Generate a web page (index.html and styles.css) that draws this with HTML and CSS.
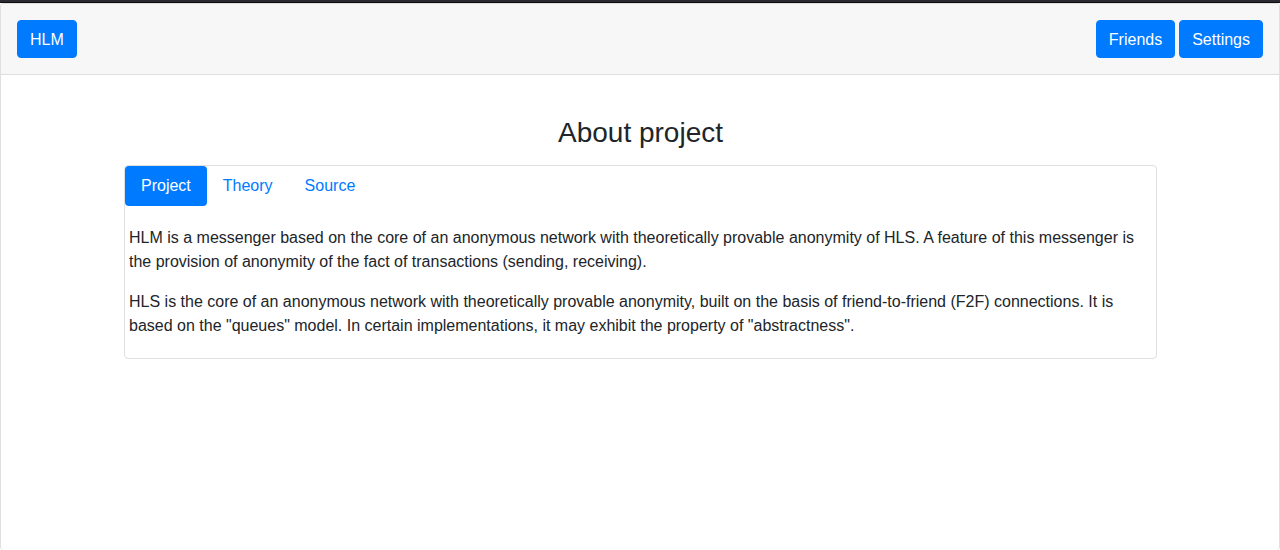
FILE: index.html
```html
<!DOCTYPE html>
<html lang="en">
<head>
<meta charset="utf-8">
<title>HLM</title>
<link rel="stylesheet" href="styles.css">
</head>
<body>
<div class="top-strip"></div>
<div class="page-card">
  <header class="page-header">
    <a class="btn" href="#home">HLM</a>
    <nav class="page-nav">
      <a class="btn" href="#friends">Friends</a>
      <a class="btn" href="#settings">Settings</a>
    </nav>
  </header>
  <main class="page-body">
    <h1 class="title">About project</h1>
    <section class="panel">
      <nav class="tabs">
        <a class="tab tab-active" href="#project">Project</a>
        <a class="tab" href="#theory">Theory</a>
        <a class="tab" href="#source">Source</a>
      </nav>
      <div class="panel-text">
        <p>HLM is a messenger based on the core of an anonymous network with theoretically provable anonymity of HLS. A feature of this messenger is the provision of anonymity of the fact of transactions (sending, receiving).</p>
        <p>HLS is the core of an anonymous network with theoretically provable anonymity, built on the basis of friend-to-friend (F2F) connections. It is based on the "queues" model. In certain implementations, it may exhibit the property of "abstractness".</p>
      </div>
    </section>
  </main>
</div>
</body>
</html>
```

FILE: styles.css
```css
* {
  box-sizing: border-box;
}

body {
  margin: 0;
  height: 100vh;
  display: flex;
  flex-direction: column;
  background: #fff;
  color: #212529;
  font: 16px/24px "Liberation Sans", Arial, sans-serif;
}

.top-strip {
  flex: none;
  height: 3px;
  background: #2b2a33;
  border-bottom: 1px solid #0c0c0d;
}

.page-card {
  flex: 1;
  border: 1px solid #dfdfdf;
  border-bottom: 0;
  border-radius: 4px;
}

.page-header {
  display: flex;
  justify-content: space-between;
  padding: 16px;
  border-bottom: 1px solid #dfdfdf;
  border-radius: 3px 3px 0 0;
  background: #f7f7f7;
}

.page-nav {
  display: flex;
  gap: 4px;
}

.btn {
  padding: 7px 12px 5px;
  border: 1px solid #007bff;
  border-radius: 4px;
  background: #007bff;
  color: #fff;
  text-decoration: none;
}

.page-body {
  padding: 40px 122px 40px 123px;
}

.title {
  margin: 0 0 14px;
  font-size: 28px;
  line-height: 36px;
  font-weight: 500;
  text-align: center;
}

.panel {
  border: 1px solid #dfdfdf;
  border-radius: 4px;
}

.tabs {
  display: flex;
}

.tab {
  padding: 8px 16px;
  border-radius: 4px;
  color: #007bff;
  text-decoration: none;
}

.tab-active {
  background: #007bff;
  color: #fff;
}

.panel-text {
  padding: 20px 4px;
}

.panel-text p {
  margin: 0 0 16px;
}

.panel-text p:last-child {
  margin-bottom: 0;
}
```
